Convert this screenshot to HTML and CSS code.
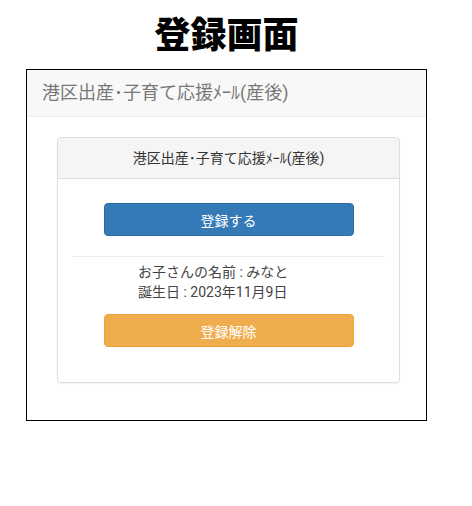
FILE: index.html
```html
<!DOCTYPE html>
<html lang="ja">
<head>
    <meta charset="UTF-8">
    <meta name="viewport" content="width=device-width, initial-scale=1.0">
    <title>登録画面</title>
    <link rel="stylesheet" href="styles.css">
</head>
<body>
    <div class="page">
        <h1 class="title">登録画面</h1>
        <div class="frame">
            <div class="app-header">港区出産･子育て応援ﾒｰﾙ(産後)</div>
            <div class="card">
                <div class="card-header">港区出産･子育て応援ﾒｰﾙ(産後)</div>
                <div class="card-body">
                    <button type="button" class="btn btn-primary">登録する</button>
                    <hr class="divider">
                    <div class="child-info">
                        <div>お子さんの名前 : みなと</div>
                        <div>誕生日 : 2023年11月9日</div>
                    </div>
                    <button type="button" class="btn btn-warning">登録解除</button>
                </div>
            </div>
        </div>
    </div>
</body>
</html>
```

FILE: styles.css
```css
body { margin: 0; background: #fff; font-family: Roboto, "Noto Sans CJK JP", sans-serif; color: #333; }
.page { width: 401px; margin-left: 26px; }
.title { margin: 0 0 19px; padding-top: 14px; font-family: "Noto Sans CJK JP", sans-serif; font-size: 36px; line-height: 36px; font-weight: 900; text-align: center; color: #000; }
.frame { box-sizing: border-box; width: 401px; height: 352px; border: 1px solid #000; }
.app-header { box-sizing: border-box; height: 47px; padding-left: 15px; background: #f8f8f8; border-bottom: 1px solid #eee; font-size: 18px; line-height: 46px; color: #777; }
.card { margin: 20px 26px 0 30px; border: 1px solid #ddd; border-radius: 4px; box-shadow: 0 1px 2px rgba(0, 0, 0, 0.06); }
.card-header { height: 40px; border-bottom: 1px solid #ddd; border-radius: 4px 4px 0 0; background: #f5f5f5; font-size: 14px; line-height: 40px; text-align: center; color: #333; }
.card-body { padding: 24px 14px 35px; }
.btn { display: block; box-sizing: border-box; width: 250px; height: 33px; margin: 0 auto; border: 1px solid; border-radius: 4px; font-family: inherit; font-size: 14px; color: #fff; cursor: pointer; }
.btn-primary { background: #337ab7; border-color: #2e6da4; }
.btn-warning { background: #f0ad4e; border-color: #eea236; }
.divider { margin: 20px 0 0; border: none; border-top: 1px solid #eee; }
.child-info { margin: 5px 0 12px; padding-left: 66px; font-size: 14px; line-height: 20px; color: #444; }
```
